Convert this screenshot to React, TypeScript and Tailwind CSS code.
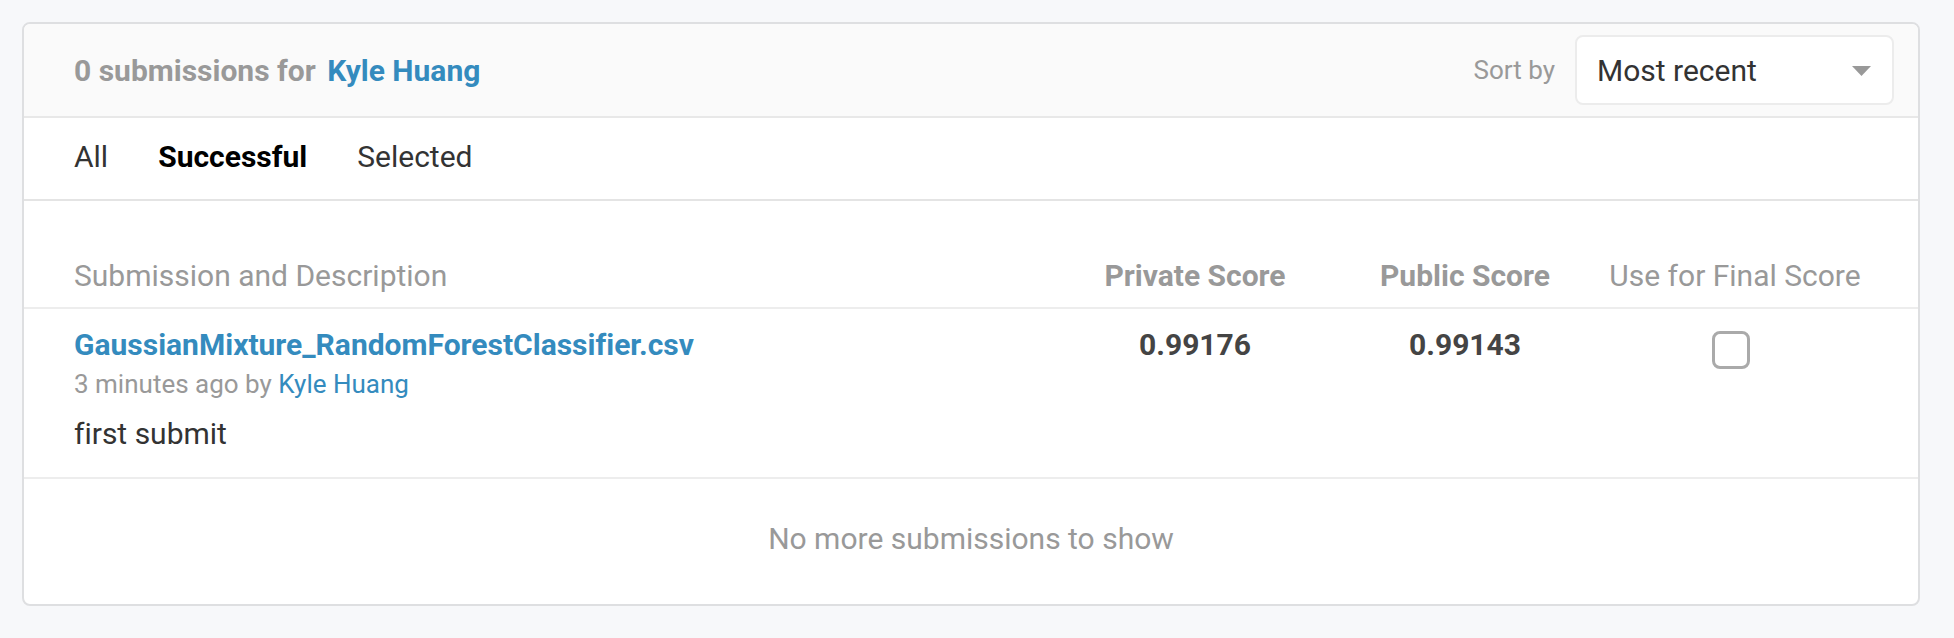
import { useState } from 'react';

const FONT = 'font-["Roboto",_"Liberation_Sans",_sans-serif]';

type Submission = {
  file: string;
  ago: string;
  author: string;
  description: string;
  privateScore: string;
  publicScore: string;
};

const submissions: Submission[] = [
  {
    file: 'GaussianMixture_RandomForestClassifier.csv',
    ago: '3 minutes ago',
    author: 'Kyle Huang',
    description: 'first submit',
    privateScore: '0.99176',
    publicScore: '0.99143',
  },
];

const tabs = ['All', 'Successful', 'Selected'];

function SortSelect() {
  return (
    <div className="flex items-center gap-[20px]">
      <span className="text-[26px] text-[#999999]">Sort by</span>
      <div className="flex h-[70px] w-[319px] items-center justify-between rounded-[8px] border-2 border-[#ececec] bg-white pl-[20px] pr-[21px]">
        <span className="text-[30px] text-[#333333]">Most recent</span>
        <svg width="19" height="10" viewBox="0 0 19 10" className="mt-[2px]">
          <path d="M0 0h19L9.5 10z" fill="#999999" />
        </svg>
      </div>
    </div>
  );
}

export default function App() {
  const [tab, setTab] = useState('Successful');
  const [selected, setSelected] = useState<Record<number, boolean>>({});

  return (
    <div className={`min-h-screen bg-[#f7f8fa] pt-[22px] pl-[22px] pr-[34px] pb-[34px] [font-variant-ligatures:none] ${FONT}`}>
      <div className="overflow-hidden rounded-[8px] border-2 border-[#dedfe1] bg-white">
        {/* header */}
        <div className="flex h-[94px] items-center justify-between border-b-2 border-[#e8e8e8] bg-[#fafafa] pl-[50px] pr-[24px]">
          <div className="text-[30px] font-bold text-[#999999]">
            0 submissions for <span className="ml-[4px] text-[#348bbe]">Kyle Huang</span>
          </div>
          <SortSelect />
        </div>

        {/* tabs */}
        <div className="flex h-[83px] items-center gap-[50px] border-b-2 border-[#e4e4e4] pl-[50px] pb-[3px]">
          {tabs.map((t) => (
            <button
              key={t}
              onClick={() => setTab(t)}
              className={`text-[30px] leading-[36px] ${
                tab === t ? 'font-bold text-black' : 'text-[#333333]'
              }`}
            >
              {t}
            </button>
          ))}
        </div>

        {/* table header */}
        <div className="flex items-center border-b-2 border-[#ededed] pt-[57px] pb-[13px] pl-[50px] pr-[48px] text-[30px] leading-[36px] text-[#999999]">
          <div className="flex-1">Submission and Description</div>
          <div className="w-[270px] text-center font-bold">Private Score</div>
          <div className="w-[270px] text-center font-bold">Public Score</div>
          <div className="w-[270px] text-center">Use for Final Score</div>
        </div>

        {/* rows */}
        {submissions.map((s, i) => (
          <div
            key={s.file}
            className="flex items-start border-b-2 border-[#ededed] pt-[18px] pb-[25px] pl-[50px] pr-[48px]"
          >
            <div className="flex flex-1 flex-col">
              <a className="text-[30px] font-bold leading-[36px] text-[#348bbe]">{s.file}</a>
              <div className="mt-[5px] text-[26px] leading-[32px] text-[#999999]">
                {s.ago} by <span className="text-[#348bbe]">{s.author}</span>
              </div>
              <div className="mt-[16px] text-[30px] leading-[36px] text-[#333333]">{s.description}</div>
            </div>
            <div className="w-[270px] text-center text-[30px] font-bold leading-[36px] text-[#444444]">
              {s.privateScore}
            </div>
            <div className="w-[270px] text-center text-[30px] font-bold leading-[36px] text-[#444444]">
              {s.publicScore}
            </div>
            <div className="flex w-[270px] justify-center pt-[4px]">
              <button
                onClick={() => setSelected({ ...selected, [i]: !selected[i] })}
                className="mr-[8px] h-[38px] w-[38px] rounded-[8px] border-[3px] border-[#aaaaaa] bg-white"
              />
            </div>
          </div>
        ))}

        {/* footer */}
        <div className="pt-[42px] pb-[47px] text-center text-[30px] leading-[36px] text-[#999999]">
          No more submissions to show
        </div>
      </div>
    </div>
  );
}
